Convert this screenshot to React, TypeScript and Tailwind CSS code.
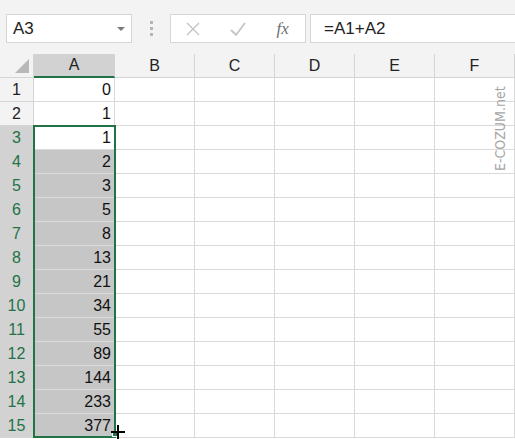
const rows: number[] = [0, 1, 1, 2, 3, 5, 8, 13, 21, 34, 55, 89, 144, 233, 377]
const cols = ["A", "B", "C", "D", "E", "F"]

const font = { fontFamily: "'Liberation Sans', Arial, sans-serif" }

function Toolbar() {
  return (
    <div className="h-[54px] bg-[#f3f3f3] flex items-start pt-[14px] pl-[6px]">
      <div className="w-[126px] h-[29px] bg-white border border-[#d6d6d6] flex items-center pl-[6px] pr-[6px]">
        <span className="text-[17px] text-[#222] flex-1">A3</span>
        <span className="w-0 h-0 border-l-[4px] border-r-[4px] border-t-[4px] border-l-transparent border-r-transparent border-t-[#7a7a7a]" />
      </div>
      <div className="w-[38px] h-[29px] flex flex-col items-center justify-center gap-[3px]">
        <span className="w-[3px] h-[3px] bg-[#b5b5b5]" />
        <span className="w-[3px] h-[3px] bg-[#b5b5b5]" />
        <span className="w-[3px] h-[3px] bg-[#b5b5b5]" />
      </div>
      <div className="w-[136px] h-[29px] bg-white border border-[#d6d6d6] flex items-center">
        <div className="w-[45px] flex justify-center">
          <svg width="16" height="16" viewBox="0 0 16 16">
            <path d="M2 2 L14 14 M14 2 L2 14" stroke="#c4c4c4" strokeWidth="1.4" fill="none" />
          </svg>
        </div>
        <div className="w-[45px] flex justify-center">
          <svg width="18" height="16" viewBox="0 0 18 16">
            <path d="M2 9 L7 14 L16 2" stroke="#c4c4c4" strokeWidth="1.8" fill="none" />
          </svg>
        </div>
        <div className="w-[45px] flex justify-center">
          <span className="text-[17px] italic text-[#6f6f6f]" style={{ fontFamily: "'Liberation Serif', serif" }}>
            fx
          </span>
        </div>
      </div>
      <div className="ml-[4px] flex-1 h-[29px] bg-white border border-[#d6d6d6] border-r-0 flex items-center pl-[13px]">
        <span className="text-[17px] text-[#222]">=A1+A2</span>
      </div>
    </div>
  )
}

export default function App() {
  return (
    <div className="w-[515px] h-[439px] bg-white overflow-hidden relative" style={font}>
      <Toolbar />
      <div className="grid grid-cols-[34px_81px_80px_80px_80px_80px_80px] auto-rows-[24px]">
        <div className="bg-[#f3f3f3] border-r border-b border-[#d4d4d4] relative">
          <span
            className="absolute right-[4px] bottom-[4px] w-0 h-0"
            style={{ borderLeft: "14px solid transparent", borderBottom: "14px solid #b8b8b8" }}
          />
        </div>
        {cols.map((c, i) => (
          <div
            key={c}
            className={`flex items-center justify-center text-[16px] border-r ${
              i === 0
                ? "bg-[#d2d2d2] text-[#222] border-b-2 border-b-[#217346] border-r-[#d4d4d4]"
                : "bg-[#f3f3f3] text-[#222] border-b border-[#d4d4d4]"
            }`}
          >
            {c}
          </div>
        ))}
        {rows.map((v, r) => {
          const sel = r >= 2
          return [
            <div
              key={`h${r}`}
              className={`flex items-center justify-center text-[16px] border-r border-b border-[#d4d4d4] ${
                sel ? "bg-[#d2d2d2] text-[#217346]" : "bg-[#f3f3f3] text-[#222]"
              }`}
            >
              {r + 1}
            </div>,
            ...cols.map((c, ci) => (
              <div
                key={`${c}${r}`}
                className={`flex items-center justify-end pr-[3px] text-[16px] text-[#111] border-r border-b border-[#dadada] ${
                  ci === 0 && r >= 3 ? "bg-[#c6c6c6]" : "bg-white"
                }`}
              >
                {ci === 0 ? v : null}
              </div>
            )),
          ]
        })}
      </div>
      {/* selection A3:A15 */}
      <div className="absolute left-[33px] top-[125px] w-[83px] h-[313px] border-2 border-[#217346] pointer-events-none" />
      <div className="absolute left-[112px] top-[431px] w-[6px] h-[6px] bg-[#217346] border border-white" />
      <div className="absolute left-[111px] top-[425px] w-[14px] h-[14px] pointer-events-none">
        <span className="absolute left-[6px] top-0 w-[2px] h-[14px] bg-black" />
        <span className="absolute left-0 top-[6px] w-[14px] h-[2px] bg-black" />
      </div>
      <div
        className="absolute left-[490px] top-[171px] text-[14px] text-[#a6a6a6] origin-top-left -rotate-90 whitespace-nowrap"
        style={{ fontFamily: "'DejaVu Sans Condensed', sans-serif" }}
      >
        E-COZUM.net
      </div>
    </div>
  )
}
